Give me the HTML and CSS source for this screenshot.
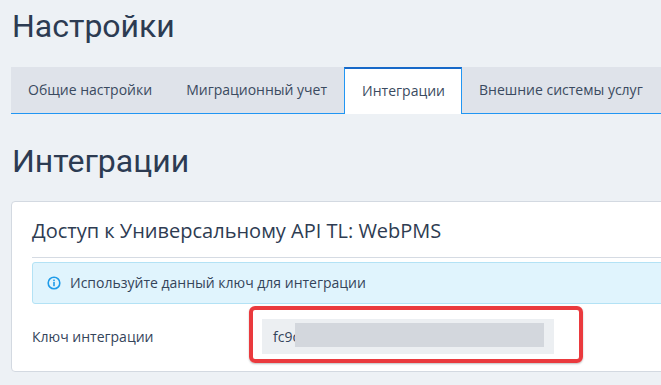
FILE: index.html
```html
<!DOCTYPE html>
<html lang="ru">
<head>
<meta charset="utf-8">
<title>Настройки</title>
<link rel="stylesheet" href="styles.css">
</head>
<body>
<div class="page">
  <h1 class="page-title">Настройки</h1>
  <ul class="tabs">
    <li class="tab">Общие настройки</li>
    <li class="tab">Миграционный учет</li>
    <li class="tab tab-active">Интеграции</li>
    <li class="tab">Внешние системы услуг</li>
  </ul>
  <h2 class="section-title">Интеграции</h2>
  <div class="card">
    <h3 class="card-title">Доступ к Универсальному API TL: WebPMS</h3>
    <div class="alert">
      <svg class="alert-icon" width="14" height="14" viewBox="0 0 14 14">
        <circle cx="7" cy="7" r="5.8" fill="none" stroke="#1e9be9" stroke-width="1.6"/>
        <rect x="6.2" y="6" width="1.6" height="4.2" fill="#1e9be9"/>
        <rect x="6.2" y="3.6" width="1.6" height="1.6" fill="#1e9be9"/>
      </svg>
      <span>Используйте данный ключ для интеграции</span>
    </div>
    <div class="form-row">
      <label class="form-label">Ключ интеграции</label>
      <div class="field">
        <div class="input">fc9c</div>
        <div class="blur"></div>
        <div class="highlight"></div>
      </div>
    </div>
  </div>
</div>
</body>
</html>
```

FILE: styles.css
```css
html, body {
  margin: 0;
  padding: 0;
  background: #edf1f5;
  overflow: hidden;
}
body {
  font-family: "Open Sans", "Liberation Sans", sans-serif;
  color: #2f3d52;
}
.page {
  width: 700px;
  padding-left: 11px;
}
.page-title, .section-title {
  font-family: Roboto, "Liberation Sans", sans-serif;
  font-weight: 400;
  font-size: 32px;
  line-height: 40px;
  color: #2c3b52;
  margin: 0;
  padding-left: 1px;
}
.page-title {
  margin-top: 6px;
  margin-bottom: 21px;
}
.tabs {
  list-style: none;
  margin: 0;
  padding: 0;
  display: flex;
  height: 46px;
  background: #dfe3ea;
  border-bottom: 1px solid #2196f3;
}
.tab {
  padding: 0 17px;
  font-size: 14px;
  line-height: 46px;
  color: #3a4a60;
}
.tab-active {
  background: #fff;
  border-top: 2px solid #1769c8;
  border-left: 1px solid #2196f3;
  border-right: 1px solid #2196f3;
  line-height: 44px;
  height: 45px;
  margin-bottom: -1px;
  padding: 0 16px 0 17px;
}
.section-title {
  margin-top: 27px;
  margin-bottom: 20px;
}
.card {
  background: #fff;
  border: 1px solid #d3d9e1;
  border-radius: 4px;
  padding: 15px 20px 17px;
}
.card-title {
  margin: 0;
  font-weight: 400;
  font-size: 20px;
  line-height: 28px;
  color: #2e3c52;
  padding-bottom: 12px;
  border-bottom: 1px solid #d5dbe3;
}
.alert {
  margin-top: 4px;
  display: flex;
  align-items: center;
  gap: 9px;
  background: #e0f4fd;
  border: 1px solid #b3e2f5;
  border-radius: 3px;
  padding: 10px 14px;
  font-size: 14px;
  line-height: 20px;
  color: #34445a;
}
.alert-icon {
  flex: none;
}
.form-row {
  display: flex;
  align-items: center;
  margin-top: 15px;
}
.form-label {
  width: 230px;
  font-size: 14px;
  line-height: 20px;
  color: #34445a;
}
.field {
  position: relative;
  width: 292px;
  height: 35px;
}
.input {
  height: 35px;
  box-sizing: border-box;
  background: #eceff2;
  padding: 0 11px;
  font-size: 14px;
  line-height: 35px;
  color: #34445a;
}
.blur {
  position: absolute;
  left: 33px;
  top: 4px;
  width: 249px;
  height: 24px;
  background: #d3d7dd;
}
.highlight {
  position: absolute;
  left: -13px;
  top: -13px;
  right: -29px;
  bottom: -9px;
  border: 4px solid #ea3a3e;
  border-radius: 6px;
  box-shadow: 0 1px 2px rgba(0,0,0,0.25);
}
```
